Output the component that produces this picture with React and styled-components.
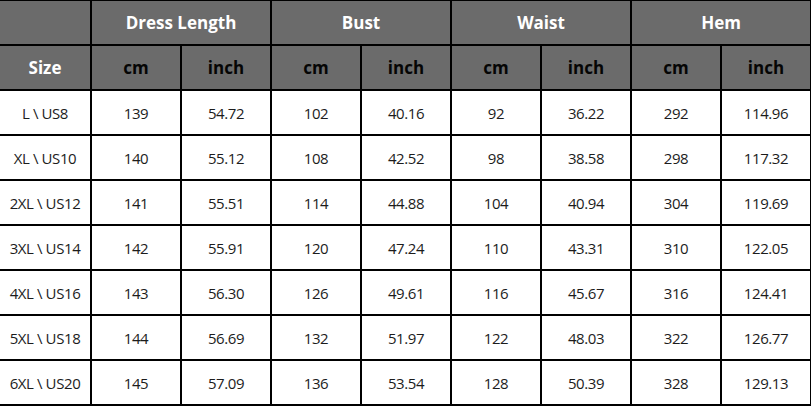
import React from "react";
import styled, { createGlobalStyle } from "styled-components";

const GlobalStyle = createGlobalStyle`
  html, body {
    margin: 0;
    padding: 0;
    background: #ffffff;
    overflow: hidden;
  }
`;

const groups = ["Dress Length", "Bust", "Waist", "Hem"];

const rows = [
  ["L \\ US8", "139", "54.72", "102", "40.16", "92", "36.22", "292", "114.96"],
  ["XL \\ US10", "140", "55.12", "108", "42.52", "98", "38.58", "298", "117.32"],
  ["2XL \\ US12", "141", "55.51", "114", "44.88", "104", "40.94", "304", "119.69"],
  ["3XL \\ US14", "142", "55.91", "120", "47.24", "110", "43.31", "310", "122.05"],
  ["4XL \\ US16", "143", "56.30", "126", "49.61", "116", "45.67", "316", "124.41"],
  ["5XL \\ US18", "144", "56.69", "132", "51.97", "122", "48.03", "322", "126.77"],
  ["6XL \\ US20", "145", "57.09", "136", "53.54", "128", "50.39", "328", "129.13"],
];

const Chart = styled.div`
  display: grid;
  grid-template-columns: 90px repeat(8, 88px);
  grid-auto-rows: 43px;
  gap: 2px;
  width: fit-content;
  padding: 1px 2px 2px 0;
  background: #000000;
`;

const HeadCell = styled.div`
  grid-column: span ${(p) => p.$span || 1};
  display: flex;
  align-items: center;
  justify-content: center;
  background: #6b6b6b;
  color: ${(p) => (p.$light ? "#ffffff" : "#050505")};
  font-family: "Open Sans", "Liberation Sans", sans-serif;
  font-weight: 700;
  font-size: 17px;
  padding-bottom: 1px;
`;

const Cell = styled.div`
  display: flex;
  align-items: center;
  justify-content: center;
  background: #ffffff;
  color: #1c1c1c;
  font-family: "Open Sans", "Liberation Sans", sans-serif;
  font-size: 15px;
  letter-spacing: -0.4px;
`;

export default function App() {
  return (
    <>
      <GlobalStyle />
      <Chart>
        <HeadCell />
        {groups.map((g) => (
          <HeadCell key={g} $span={2} $light>
            {g}
          </HeadCell>
        ))}
        <HeadCell $light>Size</HeadCell>
        {groups.map((g) => (
          <React.Fragment key={g + "-unit"}>
            <HeadCell>cm</HeadCell>
            <HeadCell>inch</HeadCell>
          </React.Fragment>
        ))}
        {rows.map((r) =>
          r.map((v, i) => <Cell key={r[0] + i}>{v}</Cell>)
        )}
      </Chart>
    </>
  );
}
